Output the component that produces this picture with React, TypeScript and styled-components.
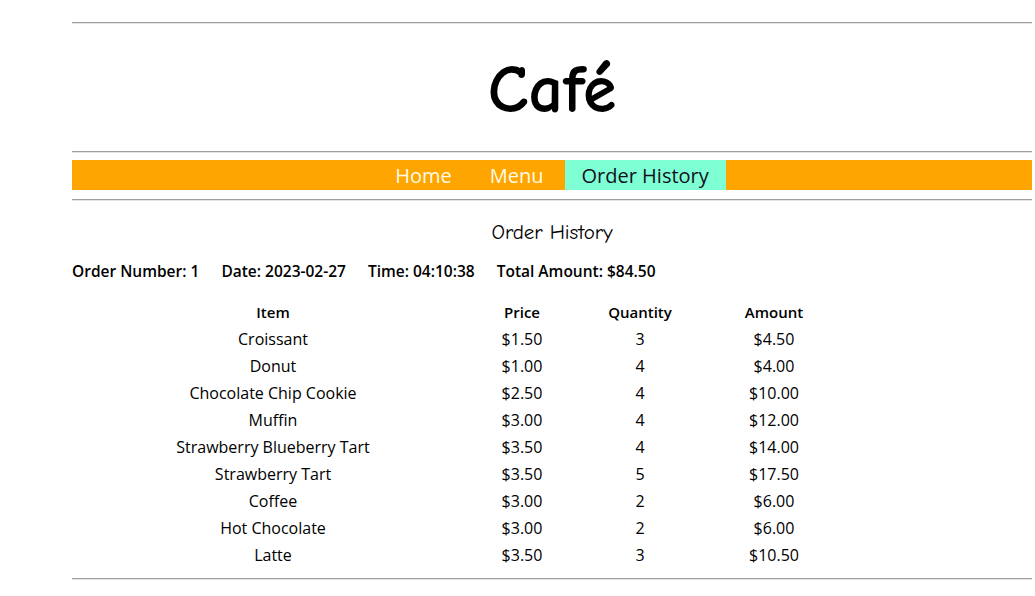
import React from "react";
import styled, { createGlobalStyle } from "styled-components";

const Global = createGlobalStyle`
  html, body { margin: 0; padding: 0; background: #ffffff; }
  body { padding: 8px; font-family: "Open Sans", "Noto Sans", sans-serif; color: #000; }
`;

const Page = styled.div`
  margin-left: 64px;
  width: 960px;
  display: flex;
  flex-direction: column;
`;

const Rule = styled.hr<{ $top?: number }>`
  margin: ${(p) => p.$top ?? 0}px 0 0 0;
  height: 0;
  border: 0;
  border-top: 1px solid #a0a0a0;
  border-bottom: 1px solid #e4e4e4;
`;

const Title = styled.h1`
  margin: 0;
  height: 127px;
  display: flex;
  align-items: center;
  justify-content: center;
  padding-top: 4px;
  box-sizing: border-box;
  font-family: "Comic Sans MS", "Comic Neue", "Open Sans", sans-serif;
  font-weight: 700;
  font-size: 68px;
`;

const Nav = styled.nav`
  margin-top: 7px;
  height: 30px;
  background: #ffa500;
  display: flex;
  justify-content: center;
  gap: 4px;
`;

const NavItem = styled.a<{ $active?: boolean }>`
  display: flex;
  align-items: center;
  padding: 0 17px;
  font-size: 20px;
  text-decoration: none;
  color: ${(p) => (p.$active ? "#111122" : "#fffbe6")};
  background: ${(p) => (p.$active ? "#7fffd4" : "transparent")};
  cursor: pointer;
`;

const Heading = styled.h2`
  margin: 20px 0 0 0;
  line-height: 22px;
  text-align: center;
  font-family: "Comic Sans MS", "Comic Neue", "Open Sans", sans-serif;
  font-weight: 400;
  font-size: 21px;
`;

const Info = styled.div`
  margin-top: 18px;
  display: flex;
  gap: 22px;
  line-height: 20px;
  font-size: 15.5px;
  font-weight: 600;
`;

const Table = styled.div`
  margin-top: 17px;
  display: grid;
  grid-template-columns: 402px 96px 140px 128px;
  grid-auto-rows: 27px;
`;

const Cell = styled.div<{ $head?: boolean }>`
  display: flex;
  align-items: center;
  justify-content: center;
  white-space: nowrap;
  font-weight: ${(p) => (p.$head ? 600 : 400)};
  font-size: ${(p) => (p.$head ? "15px" : "16px")};
`;

const items: [string, string, number, string][] = [
  ["Croissant", "$1.50", 3, "$4.50"],
  ["Donut", "$1.00", 4, "$4.00"],
  ["Chocolate Chip Cookie", "$2.50", 4, "$10.00"],
  ["Muffin", "$3.00", 4, "$12.00"],
  ["Strawberry Blueberry Tart", "$3.50", 4, "$14.00"],
  ["Strawberry Tart", "$3.50", 5, "$17.50"],
  ["Coffee", "$3.00", 2, "$6.00"],
  ["Hot Chocolate", "$3.00", 2, "$6.00"],
  ["Latte", "$3.50", 3, "$10.50"],
];

export default function App() {
  return (
    <>
      <Global />
      <Page>
        <Rule $top={14} />
        <Title>Café</Title>
        <Rule />
        <Nav>
          <NavItem>Home</NavItem>
          <NavItem>Menu</NavItem>
          <NavItem $active>Order History</NavItem>
        </Nav>
        <Rule $top={9} />
        <Heading>Order History</Heading>
        <Info>
          <span>Order Number: 1</span>
          <span>Date: 2023-02-27</span>
          <span>Time: 04:10:38</span>
          <span>Total Amount: $84.50</span>
        </Info>
        <Table>
          <Cell $head>Item</Cell>
          <Cell $head>Price</Cell>
          <Cell $head>Quantity</Cell>
          <Cell $head>Amount</Cell>
          {items.map(([n, p, q, a]) => (
            <React.Fragment key={n}>
              <Cell>{n}</Cell>
              <Cell>{p}</Cell>
              <Cell>{q}</Cell>
              <Cell>{a}</Cell>
            </React.Fragment>
          ))}
        </Table>
        <Rule $top={10} />
      </Page>
    </>
  );
}
